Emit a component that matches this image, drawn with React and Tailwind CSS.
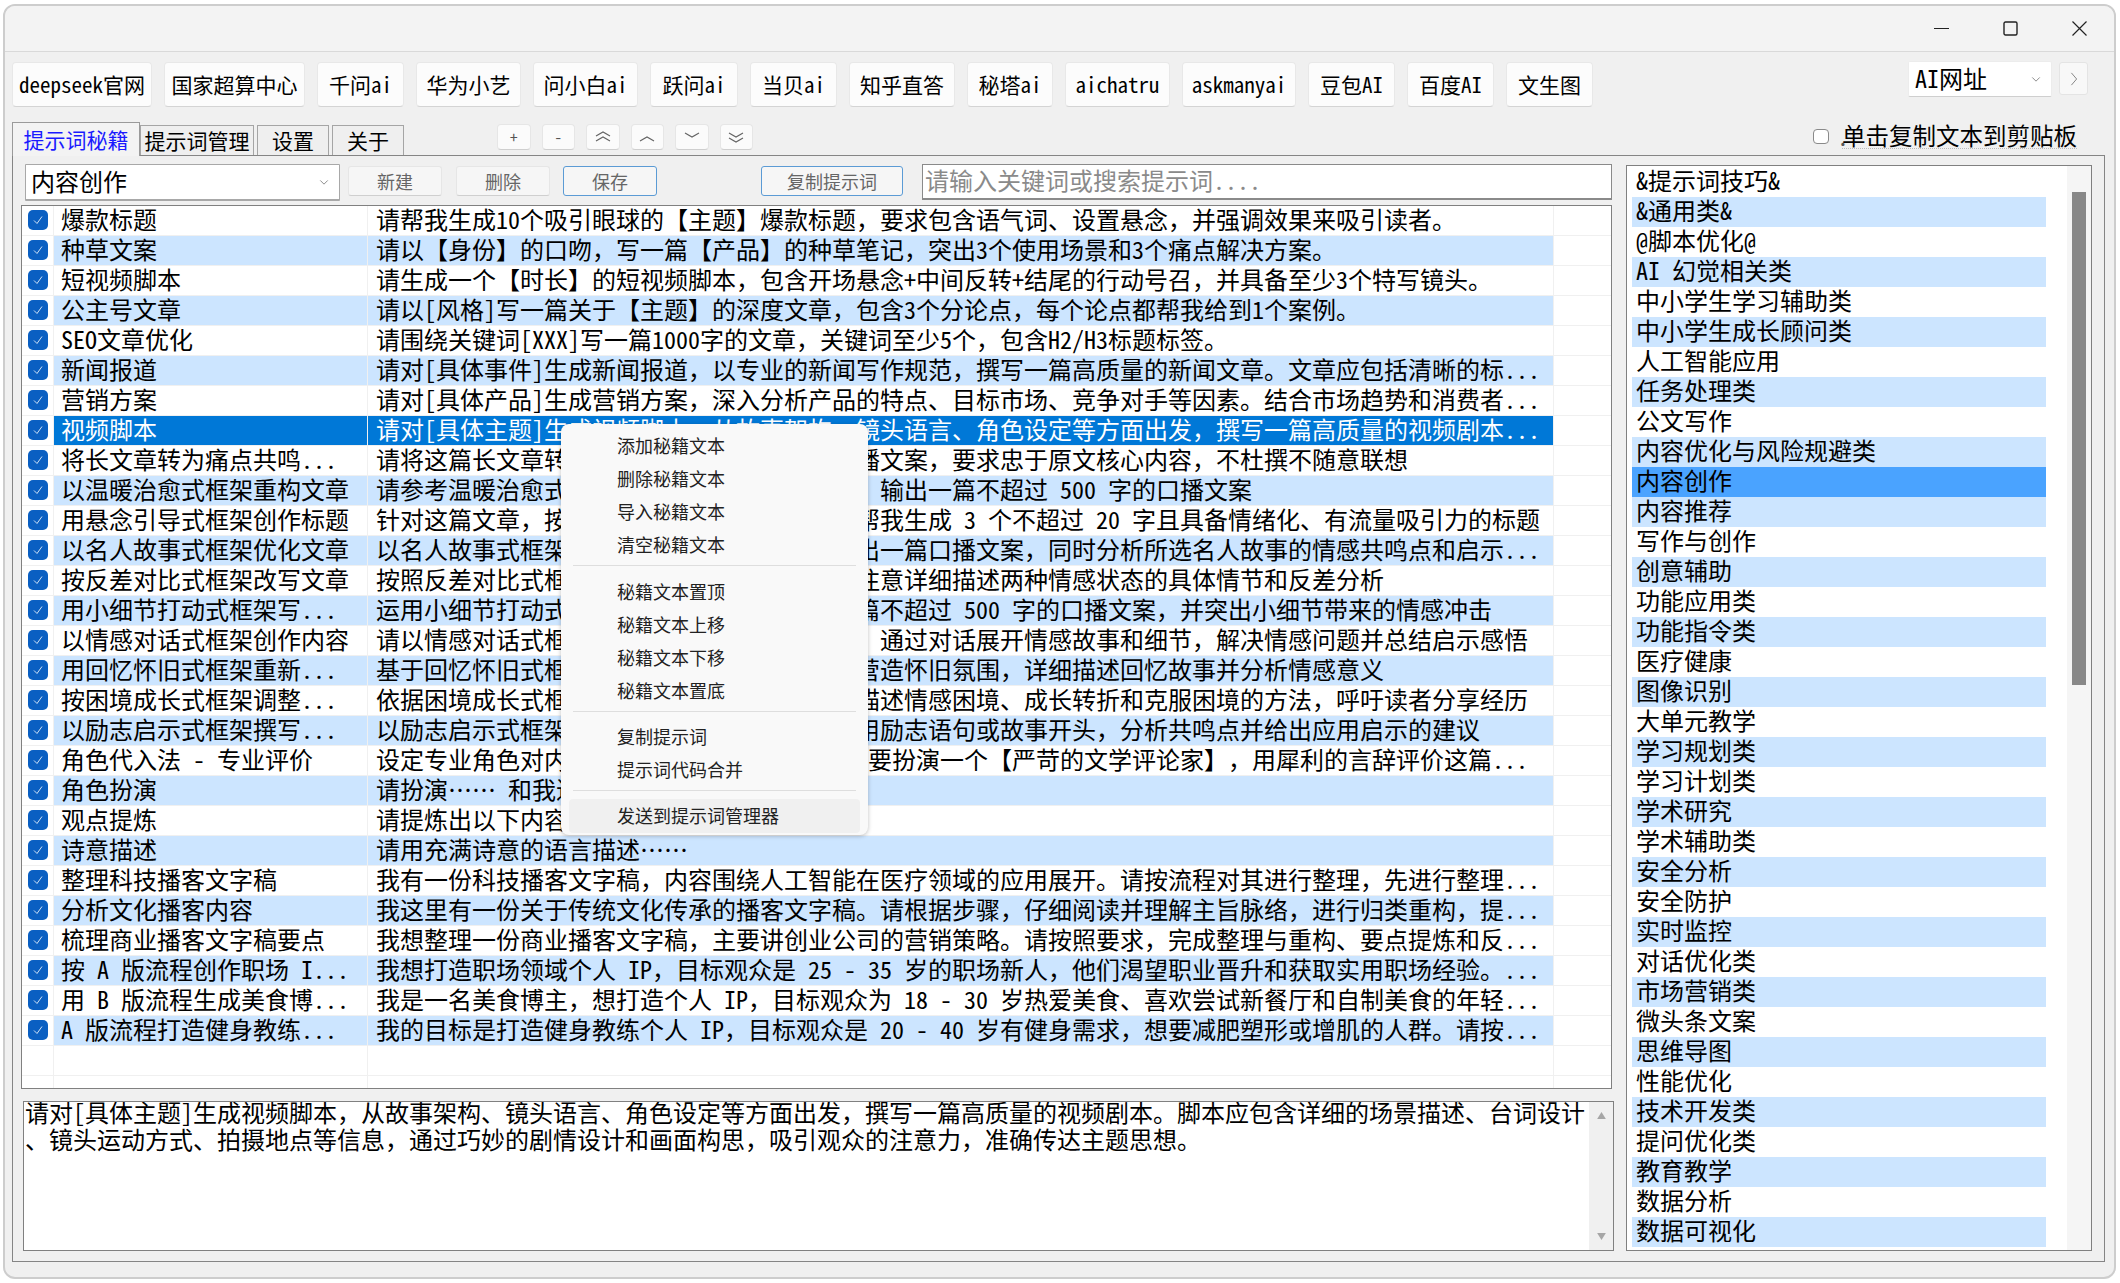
const LINKS = [
  { label: 'deepseek官网', w: 'w-[140px]' },
  { label: '国家超算中心', w: 'w-[141px]' },
  { label: '千问ai', w: 'w-[87px]' },
  { label: '华为小艺', w: 'w-[105px]' },
  { label: '问小白ai', w: 'w-[105px]' },
  { label: '跃问ai', w: 'w-[88px]' },
  { label: '当贝ai', w: 'w-[87px]' },
  { label: '知乎直答', w: 'w-[106px]' },
  { label: '秘塔ai', w: 'w-[86px]' },
  { label: 'aichatru', w: 'w-[105px]' },
  { label: 'askmanyai', w: 'w-[114px]' },
  { label: '豆包AI', w: 'w-[87px]' },
  { label: '百度AI', w: 'w-[87px]' },
  { label: '文生图', w: 'w-[87px]' },
]

const ROWS = [
  ['爆款标题', '请帮我生成10个吸引眼球的【主题】爆款标题，要求包含语气词、设置悬念，并强调效果来吸引读者。'],
  ['种草文案', '请以【身份】的口吻，写一篇【产品】的种草笔记，突出3个使用场景和3个痛点解决方案。'],
  ['短视频脚本', '请生成一个【时长】的短视频脚本，包含开场悬念+中间反转+结尾的行动号召，并具备至少3个特写镜头。'],
  ['公主号文章', '请以[风格]写一篇关于【主题】的深度文章，包含3个分论点，每个论点都帮我给到1个案例。'],
  ['SEO文章优化', '请围绕关键词[XXX]写一篇1000字的文章，关键词至少5个，包含H2/H3标题标签。'],
  ['新闻报道', '请对[具体事件]生成新闻报道，以专业的新闻写作规范，撰写一篇高质量的新闻文章。文章应包括清晰的标...'],
  ['营销方案', '请对[具体产品]生成营销方案，深入分析产品的特点、目标市场、竞争对手等因素。结合市场趋势和消费者...'],
  ['视频脚本', '请对[具体主题]生成视频脚本，从故事架构、镜头语言、角色设定等方面出发，撰写一篇高质量的视频剧本...'],
  ['将长文章转为痛点共鸣...', '请将这篇长文章转写成痛点共鸣式框架下的口播文案，要求忠于原文核心内容，不杜撰不随意联想'],
  ['以温暖治愈式框架重构文章', '请参考温暖治愈式框架将这篇文章进行重构，  输出一篇不超过 500 字的口播文案'],
  ['用悬念引导式框架创作标题', '针对这篇文章，按照悬念引导式框架要求，请帮我生成 3 个不超过 20 字且具备情绪化、有流量吸引力的标题'],
  ['以名人故事式框架优化文章', '以名人故事式框架，优化这篇文章内容，并输出一篇口播文案，同时分析所选名人故事的情感共鸣点和启示...'],
  ['按反差对比式框架改写文章', '按照反差对比式框架改写这篇文章内容，并且注意详细描述两种情感状态的具体情节和反差分析'],
  ['用小细节打动式框架写...', '运用小细节打动式框架改写文章内容，输出一篇不超过 500 字的口播文案，并突出小细节带来的情感冲击'],
  ['以情感对话式框架创作内容', '请以情感对话式框架重写这篇文章内容，并且  通过对话展开情感故事和细节，解决情感问题并总结启示感悟'],
  ['用回忆怀旧式框架重新...', '基于回忆怀旧式框架改写这篇文章内容，重点营造怀旧氛围，详细描述回忆故事并分析情感意义'],
  ['按困境成长式框架调整...', '依据困境成长式框架改写这篇文章内容，重点描述情感困境、成长转折和克服困境的方法，呼吁读者分享经历'],
  ['以励志启示式框架撰写...', '以励志启示式框架改写这篇文章的内容，并使用励志语句或故事开头，分析共鸣点并给出应用启示的建议'],
  ['角色代入法 - 专业评价', '设定专业角色对内容进行评价，例如你现在需 要扮演一个【严苛的文学评论家】，用犀利的言辞评价这篇...'],
  ['角色扮演', '请扮演…… 和我进行对话'],
  ['观点提炼', '请提炼出以下内容'],
  ['诗意描述', '请用充满诗意的语言描述……'],
  ['整理科技播客文字稿', '我有一份科技播客文字稿，内容围绕人工智能在医疗领域的应用展开。请按流程对其进行整理，先进行整理...'],
  ['分析文化播客内容', '我这里有一份关于传统文化传承的播客文字稿。请根据步骤，仔细阅读并理解主旨脉络，进行归类重构，提...'],
  ['梳理商业播客文字稿要点', '我想整理一份商业播客文字稿，主要讲创业公司的营销策略。请按照要求，完成整理与重构、要点提炼和反...'],
  ['按 A 版流程创作职场 I...', '我想打造职场领域个人 IP，目标观众是 25 - 35 岁的职场新人，他们渴望职业晋升和获取实用职场经验。...'],
  ['用 B 版流程生成美食博...', '我是一名美食博主，想打造个人 IP，目标观众为 18 - 30 岁热爱美食、喜欢尝试新餐厅和自制美食的年轻...'],
  ['A 版流程打造健身教练...', '我的目标是打造健身教练个人 IP，目标观众是 20 - 40 岁有健身需求，想要减肥塑形或增肌的人群。请按...'],
]

const CATEGORIES = [
  '&提示词技巧&', '&通用类&', '@脚本优化@', 'AI 幻觉相关类', '中小学生学习辅助类', '中小学生成长顾问类',
  '人工智能应用', '任务处理类', '公文写作', '内容优化与风险规避类', '内容创作', '内容推荐', '写作与创作',
  '创意辅助', '功能应用类', '功能指令类', '医疗健康', '图像识别', '大单元教学', '学习规划类', '学习计划类',
  '学术研究', '学术辅助类', '安全分析', '安全防护', '实时监控', '对话优化类', '市场营销类', '微头条文案',
  '思维导图', '性能优化', '技术开发类', '提问优化类', '教育教学', '数据分析', '数据可视化',
]

const MENU = [
  { items: ['添加秘籍文本', '删除秘籍文本', '导入秘籍文本', '清空秘籍文本'], gap: 'h-[14px]' },
  { items: ['秘籍文本置顶', '秘籍文本上移', '秘籍文本下移', '秘籍文本置底'], gap: 'h-[13px]' },
  { items: ['复制提示词', '提示词代码合并'], gap: 'h-[13px]' },
]

// hwid narrows Latin to half width but also squeezes the comma, so it is taken back here
function Txt({ children }) {
  if (!children) return null
  return children.split(/(，)/).map((part, i) =>
    part === '，' ? <span key={i} className="[font-feature-settings:normal]">，</span> : part
  )
}

function Chevron({ className }) {
  return (
    <svg viewBox="0 0 12 8" className={className} fill="none" stroke="#777" strokeWidth="1">
      <path d="M1.5 1.5 6 6l4.5-4.5" />
    </svg>
  )
}

function StepIcon({ dir, double }) {
  return (
    <svg viewBox="0 0 16 14" className="w-[16px] h-[14px]" fill="none" stroke="#666" strokeWidth="1.2">
      {dir === 'up' ? <path d="M1 11l7-4 7 4" /> : <path d="M1 3l7 4 7-4" />}
      {double && (dir === 'up' ? <path d="M1 6l7-4 7 4" /> : <path d="M1 8l7 4 7-4" />)}
    </svg>
  )
}

function SmallButton({ children }) {
  return (
    <div className="w-[33.5px] h-[26px] flex items-center justify-center bg-[#fbfbfb] border border-[#e6e6e6] border-b-[#cfcfcf] rounded-[4px] text-[15px] text-[#555]">
      {children}
    </div>
  )
}

function ActionButton({ label, className, active }) {
  return (
    <div className={`h-[30px] flex items-center justify-center rounded-[3px] text-[18px] text-[#666] bg-[#f6f6f6] border ${active ? 'border-[#5b9bd5]' : 'border-[#e6e6e6] border-b-[#cfcfcf]'} ${className}`}>
      {label}
    </div>
  )
}

function Tick() {
  return (
    <div className="w-[20px] h-[20px] rounded-[5px] bg-[#0a5fc2] flex items-center justify-center">
      <svg viewBox="0 0 12 12" className="w-[12px] h-[12px]" fill="none" stroke="#cfe2f7" strokeWidth="1">
        <path d="M2 6.5 5 9.5 10 2.5" />
      </svg>
    </div>
  )
}

function PromptRow({ index, name, text }) {
  const selected = index === 7
  const striped = index % 2 === 1
  const fill = selected ? 'bg-[#0078d7] text-white' : striped ? 'bg-[#cce5ff]' : 'bg-white'
  return (
    <div className="flex h-[30px] border-b border-[#f0f0f0]">
      <div className="w-[32px] shrink-0 border-r border-[#f0f0f0] flex items-center justify-center pb-[1px]">
        {name !== undefined && <Tick />}
      </div>
      <div className={`w-[314px] shrink-0 pl-[7px] leading-[26px] whitespace-pre overflow-hidden border-r border-[#f0f0f0] ${name !== undefined ? fill : ''}`}>
        {name}
      </div>
      <div className={`w-[1186px] shrink-0 pl-[8px] leading-[26px] whitespace-pre overflow-hidden border-r border-[#f0f0f0] ${name !== undefined ? fill : ''}`}>
        <Txt>{text}</Txt>
      </div>
    </div>
  )
}

function ContextMenu() {
  return (
    <div className="absolute left-[556px] top-[418px] w-[307px] h-[411px] pt-[5px] bg-[#f9f9f9] rounded-[8px] shadow-[0_1px_4px_rgba(0,0,0,0.25)] text-[18px] leading-[33px] text-[#222]">
      {MENU.map((group, g) => (
        <div key={g}>
          {group.items.map((item) => (
            <div key={item} className="h-[33px] pl-[56px]">{item}</div>
          ))}
          <div className={`${group.gap} px-[12px] pt-[4px]`}>
            <div className="h-[1px] w-full bg-[#dedede]" />
          </div>
        </div>
      ))}
      <div className="h-[34px] mx-[8px] pl-[48px] rounded-[4px] bg-[#f0f0f0]">发送到提示词管理器</div>
    </div>
  )
}

export default function App() {
  return (
    <div className="w-[2120px] h-[1283px] bg-white overflow-hidden pt-[4px] pl-[3px] text-[24px] text-black font-['Noto_Sans_CJK_SC',sans-serif] [font-feature-settings:'hwid']">
      <div className="relative w-[2113px] h-[1275px] border-2 border-[#cdcdcd] rounded-[12px] bg-[#f0f0f0] overflow-hidden">
        {/* title bar */}
        <div className="h-[46px] bg-[#f3f3f3] border-b border-[#d9d9d9] flex items-center justify-end gap-[54px] pr-[27px]">
          <svg viewBox="0 0 15 15" className="w-[15px] h-[15px]" stroke="#222" strokeWidth="1.2"><path d="M0 7.5h15" /></svg>
          <svg viewBox="0 0 15 15" className="w-[15px] h-[15px]" fill="none" stroke="#222" strokeWidth="1.4"><rect x="1" y="1" width="13" height="13" rx="1.5" /></svg>
          <svg viewBox="0 0 15 15" className="w-[15px] h-[15px]" stroke="#222" strokeWidth="1.2"><path d="M.5.5l14 14M14.5.5l-14 14" /></svg>
        </div>

        {/* link buttons */}
        <div className="h-[70px] flex items-start pl-[7px] pr-[26px] pt-[10px] gap-[12px] text-[21px]">
          {LINKS.map((l) => (
            <div key={l.label} className={`${l.w} h-[45px] flex items-center justify-center bg-[#fcfcfc] border border-[#e8e8e8] border-b-[#d4d4d4] rounded-[4px]`}>
              {l.label}
            </div>
          ))}
          <div className="ml-auto -mt-px w-[144px] h-[36px] flex items-center justify-between pl-[6px] pr-[10px] bg-white border border-[#ececec] border-b-[#cfcfcf] rounded-[2px] text-[24px]">
            <span className="-mt-[3px]">AI网址</span>
            <Chevron className="w-[10px] h-[7px]" />
          </div>
          <div className="-ml-[5px] w-[29px] h-[33px] flex items-center justify-center bg-[#f8f8f8] border border-[#e4e4e4] rounded-[3px]">
            <svg viewBox="0 0 8 16" className="w-[8px] h-[14px]" fill="none" stroke="#777" strokeWidth="1"><path d="M1 1l6 7-6 7" /></svg>
          </div>
        </div>

        {/* tab strip */}
        <div className="h-[33px] flex items-end pl-[7px] pr-[37px] text-[21px]">
          <div className="w-[128px] h-[34px] -mb-px relative flex items-center justify-center bg-[#f3f3f3] border border-b-0 border-[#9a9a9a] text-[#1a1aff]">提示词秘籍</div>
          <div className="w-[114px] h-[30px] flex items-center justify-center bg-[#efefef] border border-b-0 border-[#a5a5a5]">提示词管理</div>
          <div className="ml-[3px] w-[72px] h-[30px] flex items-center justify-center bg-[#efefef] border border-b-0 border-[#a5a5a5]">设置</div>
          <div className="ml-[3px] w-[72px] h-[30px] flex items-center justify-center bg-[#efefef] border border-b-0 border-[#a5a5a5]">关于</div>
          <div className="ml-[93px] self-start mt-[2px] flex gap-[11px]">
            <SmallButton>+</SmallButton>
            <SmallButton>-</SmallButton>
            <SmallButton><StepIcon dir="up" double /></SmallButton>
            <SmallButton><StepIcon dir="up" /></SmallButton>
            <SmallButton><StepIcon dir="down" /></SmallButton>
            <SmallButton><StepIcon dir="down" double /></SmallButton>
          </div>
          <div className="ml-auto self-start mt-[1px] flex items-center text-[23.5px] leading-[25px]">
            <div className="w-[16px] h-[15px] bg-white border border-[#8a8a8a] rounded-[4px] mr-[8px]" />
            <span className="w-[5px] text-[#555]">.</span>
            <span className="border-b border-dotted border-[#bbb]">单击复制文本到剪贴板</span>
          </div>
        </div>

        {/* tab page */}
        <div className="ml-[7px] w-[2093px] h-[1107px] border border-[#858585] flex pl-[8px] pt-[8px]">
          <div className="w-[1593px] shrink-0">
            <div className="h-[42px] flex items-start pl-[4px]">
              <div className="w-[315px] h-[37px] flex items-center justify-between pl-[5px] pr-[10px] bg-white border border-[#a8a8a8] border-b-2 rounded-[1px]">
                <span className="-mt-[3px]">内容创作</span>
                <Chevron className="w-[10px] h-[7px]" />
              </div>
              <ActionButton label="新建" className="w-[94px] ml-[8px] mt-[2px]" />
              <ActionButton label="删除" className="w-[94px] ml-[14px] mt-[2px]" />
              <ActionButton label="保存" className="w-[94px] ml-[13px] mt-[2px]" active />
              <ActionButton label="复制提示词" className="w-[142px] ml-[104px] mt-[2px]" active />
              <div className="ml-[19px] w-[690px] h-[36px] flex items-center pl-[2px] pb-[4px] bg-white border border-[#8a8a8a] border-b-2 text-[#8a8a8a]">
                请输入关键词或搜索提示词....
              </div>
            </div>

            <div className="-mt-px w-[1591px] h-[884px] bg-white border border-[#808080] overflow-hidden">
              {ROWS.map(([name, text], i) => (
                <PromptRow key={i} index={i} name={name} text={text} />
              ))}
              <PromptRow index={28} />
              <PromptRow index={29} />
            </div>

            <div className="mt-[12px] ml-[2px] w-[1591px] h-[150px] flex bg-white border border-[#808080] overflow-hidden">
              <div className="flex-1 pl-[1px] -mt-[3px] leading-[26.5px] whitespace-pre overflow-hidden">
                <Txt>{'请对[具体主题]生成视频脚本，从故事架构、镜头语言、角色设定等方面出发，撰写一篇高质量的视频剧本。脚本应包含详细的场景描述、台词设计\n、镜头运动方式、拍摄地点等信息，通过巧妙的剧情设计和画面构思，吸引观众的注意力，准确传达主题思想。'}</Txt>
              </div>
              <div className="w-[24px] shrink-0 bg-[#f0f0f0] flex flex-col items-center justify-between py-[10px]">
                <svg viewBox="0 0 10 8" className="w-[9px] h-[7px]" fill="#a6a6a6"><path d="M5 0l5 8H0z" /></svg>
                <svg viewBox="0 0 10 8" className="w-[9px] h-[7px]" fill="#a6a6a6"><path d="M0 0h10L5 8z" /></svg>
              </div>
            </div>
          </div>

          <div className="ml-[12px] mt-[1px] w-[466px] h-[1086px] flex bg-white border border-[#808080] overflow-hidden">
            <div className="w-[440px] shrink-0 pl-[5px] pt-[1px]">
              {CATEGORIES.map((c, i) => (
                <div
                  key={c}
                  className={`w-[414px] h-[30px] pl-[4px] leading-[25px] whitespace-pre ${i === 10 ? 'bg-[#4aa3ff]' : i % 2 === 1 ? 'bg-[#cce5ff]' : ''}`}
                >
                  {c}
                </div>
              ))}
            </div>
            <div className="w-[24px] shrink-0 bg-[#f5f5f5] pt-[26px] pl-[5px]">
              <div className="w-[14px] h-[493px] bg-[#888888]" />
            </div>
          </div>
        </div>

        <ContextMenu />
      </div>
    </div>
  )
}
